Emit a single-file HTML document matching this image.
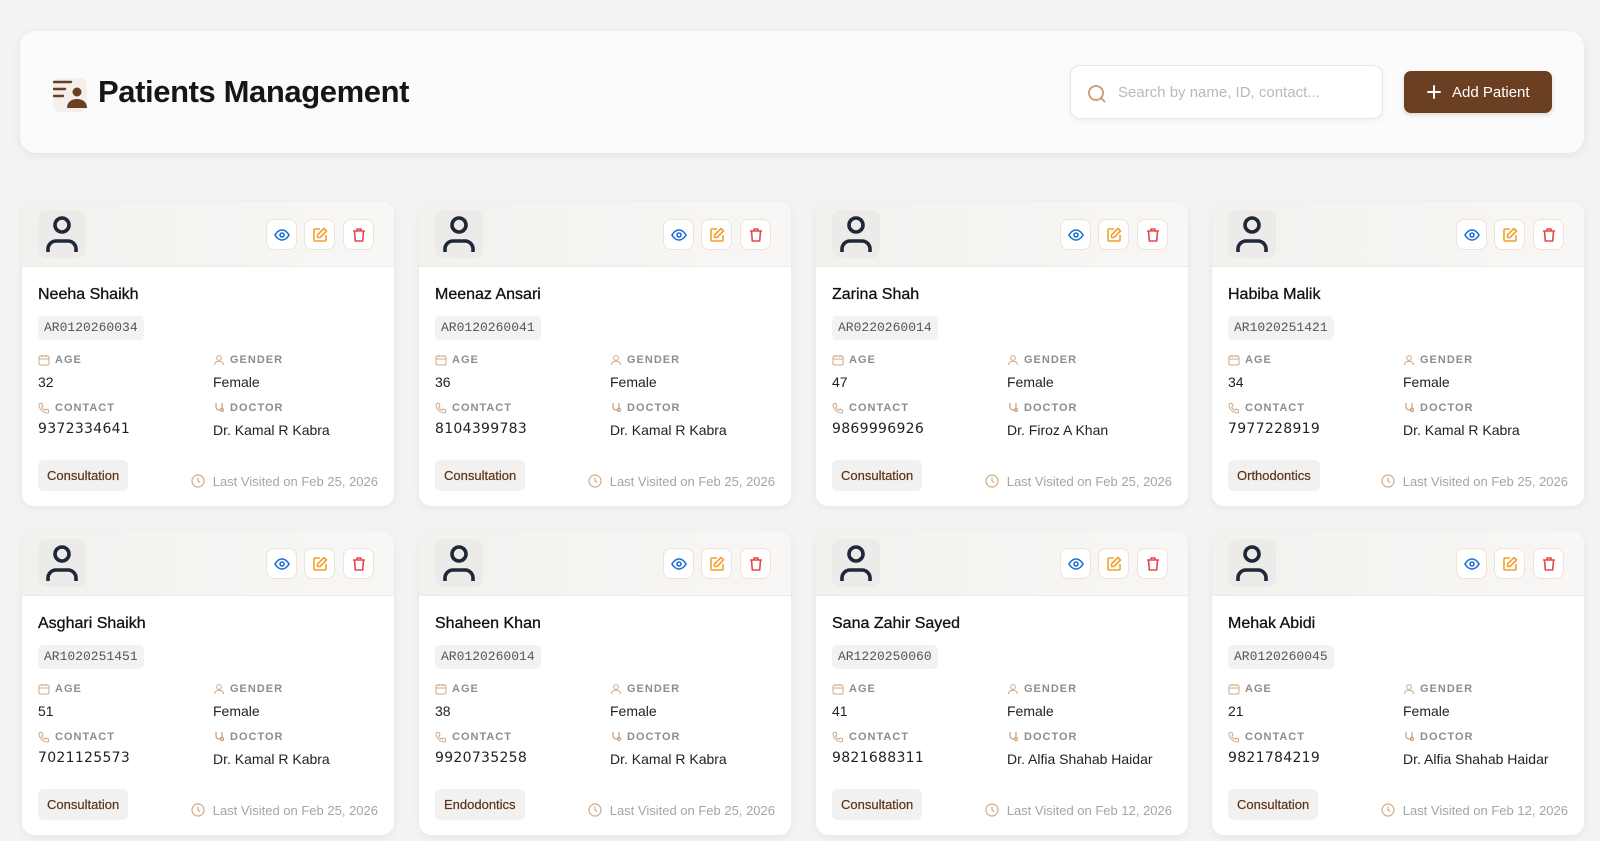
<!DOCTYPE html>
<html><head><meta charset="utf-8"><style>
*{box-sizing:border-box;margin:0;padding:0}
body{width:1600px;height:841px;overflow:hidden;background:#f3f3f3;font-family:"Liberation Sans",Arial,sans-serif;color:#1a1a1a;position:relative}
.hdr{position:absolute;left:20px;top:31px;width:1564px;height:122px;background:#fbfbfb;border-radius:16px;box-shadow:0 2px 10px rgba(0,0,0,.07)}
.hdr h1{position:absolute;left:78px;top:43px;font-size:31px;font-weight:700;letter-spacing:-0.4px;color:#161616}
.hicon{position:absolute;left:33px;top:47px;width:34px;height:34px;background:#f2efec;border-radius:7px}
.search{position:absolute;left:1050px;top:34px;width:313px;height:54px;background:#fff;border:1px solid #eee6de;border-radius:10px;box-shadow:0 2px 6px rgba(0,0,0,.05)}
.search span{position:absolute;left:47px;top:18px;font-size:15px;color:#b9b9b9}
.search svg{position:absolute;left:16px;top:18px}
.add{position:absolute;left:1384px;top:40px;width:148px;height:42px;background:#6b3f22;border-radius:7px;color:#fff;font-size:15px;box-shadow:0 2px 5px rgba(0,0,0,.15)}
.add span{position:absolute;left:48px;top:13px}
.add svg{position:absolute;left:22px;top:13px}
.card{position:absolute;width:372px;height:304px;background:#fff;border-radius:12px;box-shadow:0 2px 8px rgba(0,0,0,.06);overflow:hidden}
.band{position:absolute;left:0;top:0;width:100%;height:65px;background:linear-gradient(90deg,#f3f1ee,#f8f7f5);border-bottom:1px solid #eeebe7}
.av{position:absolute;left:16px;top:8px;width:48px;height:48px;background:#ecebea;border-radius:9px}
.btn{position:absolute;top:17px;width:31px;height:31px;background:#fff;border:1px solid #eee3d8;border-radius:8px}
.btn svg{position:absolute;left:7px;top:7px}
.name{position:absolute;left:16px;top:84px;font-size:16px;color:#111;-webkit-text-stroke:0.3px #111}
.id{position:absolute;left:16px;top:114px;height:24px;padding:0 6px;line-height:24px;background:#f2f2f2;border-radius:5px;font-family:"Liberation Mono",monospace;font-size:13px;color:#555}
.lbl{position:absolute;font-size:11px;letter-spacing:1px;color:#8d8d8d;font-weight:700}
.lbl svg{position:absolute;left:-17px;top:0}
.val{position:absolute;font-size:14px;color:#222}
.tag{position:absolute;left:16px;top:258px;height:31px;padding:0 9px;line-height:31px;background:#f3f1ef;border-radius:6px;font-size:13px;color:#5a3418;-webkit-text-stroke:0.2px #5a3418}
.lv{position:absolute;right:16px;top:272px;font-size:13px;color:#a5a5a5}
.lv svg{position:absolute;left:-22px;top:0}
</style></head><body>
<div class="hdr">
<div class="hicon"><svg width="34" height="34" viewBox="0 0 34 34"><g stroke="#6b3f22" stroke-width="2.4" stroke-linecap="round"><line x1="1" y1="4" x2="18" y2="4"/><line x1="1" y1="11" x2="12" y2="11"/><line x1="1" y1="18" x2="10" y2="18"/></g><circle cx="24" cy="14" r="4.5" fill="#6b3f22"/><path d="M14 30c0-6 4.5-9 10-9s10 3 10 9z" fill="#6b3f22"/></svg></div>
<h1>Patients Management</h1>
<div class="search"><svg width="20" height="20" viewBox="0 0 20 20" fill="none" stroke="#c79a72" stroke-width="1.8"><circle cx="9" cy="9" r="7"/><line x1="14" y1="14" x2="18" y2="18"/></svg><span>Search by name, ID, contact...</span></div>
<div class="add"><svg width="16" height="16" viewBox="0 0 16 16" stroke="#fff" stroke-width="2" stroke-linecap="round"><line x1="8" y1="2" x2="8" y2="14"/><line x1="2" y1="8" x2="14" y2="8"/></svg><span>Add Patient</span></div>
</div>
<div id="cards"></div>
<script>
const data=[
["Neeha Shaikh","AR0120260034","32","Female","9372334641","Dr. Kamal R Kabra","Consultation","Feb 25, 2026"],
["Meenaz Ansari","AR0120260041","36","Female","8104399783","Dr. Kamal R Kabra","Consultation","Feb 25, 2026"],
["Zarina Shah","AR0220260014","47","Female","9869996926","Dr. Firoz A Khan","Consultation","Feb 25, 2026"],
["Habiba Malik","AR1020251421","34","Female","7977228919","Dr. Kamal R Kabra","Orthodontics","Feb 25, 2026"],
["Asghari Shaikh","AR1020251451","51","Female","7021125573","Dr. Kamal R Kabra","Consultation","Feb 25, 2026"],
["Shaheen Khan","AR0120260014","38","Female","9920735258","Dr. Kamal R Kabra","Endodontics","Feb 25, 2026"],
["Sana Zahir Sayed","AR1220250060","41","Female","9821688311","Dr. Alfia Shahab Haidar","Consultation","Feb 12, 2026"],
["Mehak Abidi","AR0120260045","21","Female","9821784219","Dr. Alfia Shahab Haidar","Consultation","Feb 12, 2026"]];
const xs=[22,419,816,1212],ys=[202,531];
const ic={
cal:'<svg width="12" height="12" viewBox="0 0 12 12" fill="none" stroke="#d1a986" stroke-width="1"><rect x="1" y="2" width="10" height="9" rx="1.5"/><line x1="1" y1="5" x2="11" y2="5"/><line x1="4" y1="1" x2="4" y2="3"/><line x1="8" y1="1" x2="8" y2="3"/></svg>',
usr:'<svg width="12" height="12" viewBox="0 0 12 12" fill="none" stroke="#d1a986" stroke-width="1"><circle cx="6" cy="4" r="2.4"/><path d="M1.5 11c0-2.5 2-3.8 4.5-3.8s4.5 1.3 4.5 3.8"/></svg>',
ph:'<svg width="12" height="12" viewBox="0 0 12 12" fill="none" stroke="#d1a986" stroke-width="1"><path d="M2 1.5h2l1 2.5-1.3 1a6 6 0 0 0 3.3 3.3l1-1.3 2.5 1v2a1 1 0 0 1-1 1C5 11 1 7 1 2.5a1 1 0 0 1 1-1z"/></svg>',
doc:'<svg width="12" height="12" viewBox="0 0 12 12" fill="none" stroke="#c79a72" stroke-width="1.2"><path d="M3 1v4a3 3 0 0 0 6 0V1"/><circle cx="9" cy="8" r="1.5"/></svg>'};
let h='';
data.forEach((d,i)=>{const x=xs[i%4],y=ys[Math.floor(i/4)];
h+=`<div class="card" style="left:${x}px;top:${y}px"><div class="band"></div>
<div class="av"><svg width="48" height="48" viewBox="0 0 48 48" fill="none" stroke="#1e2838" stroke-width="3.6"><circle cx="24" cy="15" r="7"/><path d="M10 42v-3a8 8 0 0 1 8-8h12a8 8 0 0 1 8 8v3"/></svg></div>
<div class="btn" style="left:244px"><svg width="16" height="16" viewBox="0 0 16 16" fill="none" stroke="#1f6fd6" stroke-width="1.6"><path d="M1 8s2.6-5 7-5 7 5 7 5-2.6 5-7 5-7-5-7-5z"/><circle cx="8" cy="8" r="2"/></svg></div>
<div class="btn" style="left:282px"><svg width="16" height="16" viewBox="0 0 16 16" fill="none" stroke="#f2a12d" stroke-width="1.6" stroke-linejoin="round"><path d="M8 2H3a1 1 0 0 0-1 1v10a1 1 0 0 0 1 1h10a1 1 0 0 0 1-1V8"/><path d="M12 1.5l2.5 2.5L8 10.5H5.5V8z"/></svg></div>
<div class="btn" style="left:321px"><svg width="16" height="16" viewBox="0 0 16 16" fill="none" stroke="#e5484d" stroke-width="1.6" stroke-linejoin="round"><path d="M2 4h12"/><path d="M6 4V2h4v2"/><path d="M3.5 4l.8 10h7.4l.8-10"/></svg></div>
<div class="name">${d[0]}</div><div class="id">${d[1]}</div>
<div class="lbl" style="left:33px;top:152px">${ic.cal}AGE</div><div class="val" style="left:16px;top:172px">${d[2]}</div>
<div class="lbl" style="left:208px;top:152px">${ic.usr}GENDER</div><div class="val" style="left:191px;top:172px">${d[3]}</div>
<div class="lbl" style="left:33px;top:200px">${ic.ph}CONTACT</div><div class="val" style="left:16px;top:219px;font-family:'DejaVu Sans',sans-serif;font-size:14px;letter-spacing:.3px">${d[4]}</div>
<div class="lbl" style="left:208px;top:200px">${ic.doc}DOCTOR</div><div class="val" style="left:191px;top:220px">${d[5]}</div>
<div class="tag">${d[6]}</div>
<div class="lv"><svg width="14" height="14" viewBox="0 0 14 14" fill="none" stroke="#d1a986" stroke-width="1.2"><circle cx="7" cy="7" r="6"/><path d="M7 3.5V7l2 1.5"/></svg>Last Visited on ${d[7]}</div></div>`;});
document.getElementById('cards').innerHTML=h;
</script>
</body></html>
